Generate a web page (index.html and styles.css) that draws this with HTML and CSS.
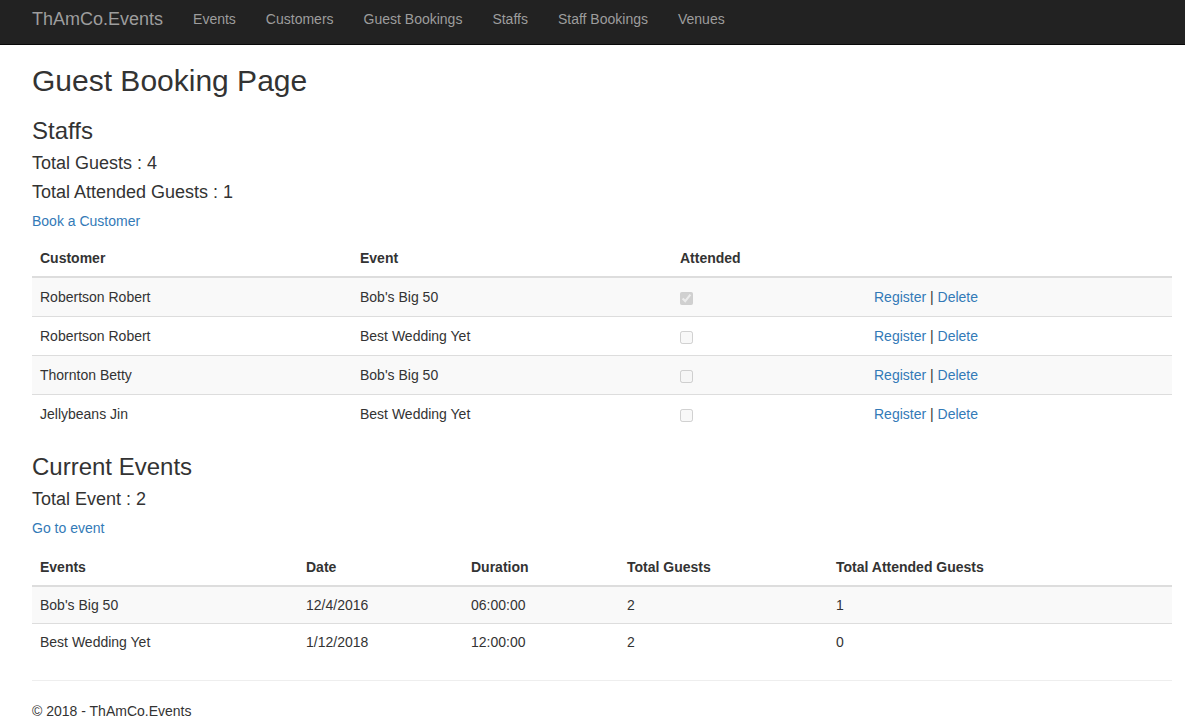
FILE: index.html
```html
<!DOCTYPE html>
<html>
<head>
<meta charset="utf-8">
<title>Guest Booking Page - ThAmCo.Events</title>
<link rel="stylesheet" href="styles.css">
</head>
<body>
<nav class="navbar">
  <div class="nav-inner">
    <a class="brand" href="#">ThAmCo.Events</a>
    <ul class="nav-links">
      <li><a href="#">Events</a></li>
      <li><a href="#">Customers</a></li>
      <li><a href="#">Guest Bookings</a></li>
      <li><a href="#">Staffs</a></li>
      <li><a href="#">Staff Bookings</a></li>
      <li><a href="#">Venues</a></li>
    </ul>
  </div>
</nav>
<div class="body-content">
  <h2>Guest Booking Page</h2>
  <h3>Staffs</h3>
  <h4>Total Guests : 4</h4>
  <h4>Total Attended Guests : 1</h4>
  <p class="action action-first"><a href="#">Book a Customer</a></p>
  <table class="table table-guests">
    <thead>
      <tr><th class="c1">Customer</th><th class="c2">Event</th><th class="c3">Attended</th><th></th></tr>
    </thead>
    <tbody>
      <tr><td>Robertson Robert</td><td>Bob's Big 50</td><td><input type="checkbox" checked disabled></td><td><a href="#">Register</a> | <a href="#">Delete</a></td></tr>
      <tr><td>Robertson Robert</td><td>Best Wedding Yet</td><td><input type="checkbox" disabled></td><td><a href="#">Register</a> | <a href="#">Delete</a></td></tr>
      <tr><td>Thornton Betty</td><td>Bob's Big 50</td><td><input type="checkbox" disabled></td><td><a href="#">Register</a> | <a href="#">Delete</a></td></tr>
      <tr><td>Jellybeans Jin</td><td>Best Wedding Yet</td><td><input type="checkbox" disabled></td><td><a href="#">Register</a> | <a href="#">Delete</a></td></tr>
    </tbody>
  </table>
  <h3>Current Events</h3>
  <h4>Total Event : 2</h4>
  <p class="action"><a href="#">Go to event</a></p>
  <table class="table table-events">
    <thead>
      <tr><th class="e1">Events</th><th class="e2">Date</th><th class="e3">Duration</th><th class="e4">Total Guests</th><th>Total Attended Guests</th></tr>
    </thead>
    <tbody>
      <tr><td>Bob's Big 50</td><td>12/4/2016</td><td>06:00:00</td><td>2</td><td>1</td></tr>
      <tr><td>Best Wedding Yet</td><td>1/12/2018</td><td>12:00:00</td><td>2</td><td>0</td></tr>
    </tbody>
  </table>
  <hr>
  <footer>
    <p>&copy; 2018 - ThAmCo.Events</p>
  </footer>
</div>
</body>
</html>
```
FILE: styles.css
```css
* { box-sizing: border-box; }
html, body { margin: 0; padding: 0; }
body {
  font-family: "Liberation Sans", Arial, Helvetica, sans-serif;
  font-size: 14px;
  line-height: 1.42857143;
  color: #333;
  background: #fff;
}
a { color: #337ab7; text-decoration: none; }

.navbar {
  background: #222;
  border-bottom: 1px solid #080808;
  height: 45px;
}
.nav-inner {
  display: flex;
  align-items: center;
  height: 44px;
  padding-left: 17px;
  padding-bottom: 6px;
}
.brand {
  color: #9d9d9d;
  font-size: 18px;
  line-height: 20px;
  padding: 0 15px;
}
.nav-links {
  display: flex;
  list-style: none;
  margin: 0;
  padding: 0;
}
.nav-links a {
  display: block;
  color: #9d9d9d;
  padding: 0 15px;
  line-height: 20px;
}

.body-content {
  padding: 0 13px 0 32px;
}
h2, h3, h4 {
  font-weight: 500;
  margin: 0;
}
h2 { font-size: 30px; line-height: 33px; margin-top: 19px; margin-bottom: 10px; }
h3 { font-size: 24px; line-height: 27px; margin-top: 20px; margin-bottom: 9px; }
h4 { font-size: 18px; line-height: 20px; margin-top: 9px; margin-bottom: 9px; }
p { margin: 0 0 10px; }
.action { margin-bottom: 11px; }
.action-first { margin-bottom: 9px; }

.table {
  width: 100%;
  border-collapse: collapse;
  border-spacing: 0;
  margin-bottom: 20px;
}
.table th {
  text-align: left;
  font-weight: bold;
  padding: 8px;
  line-height: 20px;
  border-bottom: 2px solid #ddd;
  vertical-align: bottom;
}
.table td {
  padding: 8px;
  line-height: 20px;
  border-top: 1px solid #ddd;
  vertical-align: middle;
}
.table tbody tr:nth-child(odd) { background: #f9f9f9; }

.table-guests td { padding-top: 9px; padding-bottom: 9px; }
.c1 { width: 320px; }
.c2 { width: 320px; }
.c3 { width: 194px; }
.e1 { width: 266px; }
.e2 { width: 165px; }
.e3 { width: 156px; }
.e4 { width: 209px; }

input[type="checkbox"] {
  margin: 0;
  width: 13px;
  height: 13px;
  vertical-align: middle;
}

hr {
  margin: 20px 0 20px;
  border: 0;
  border-top: 1px solid #eee;
}
footer p { margin: 0 0 10px; }
```
